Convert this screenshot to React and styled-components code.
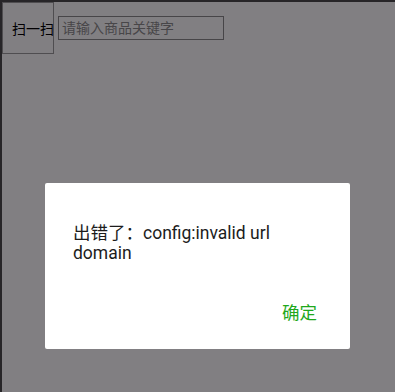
import React from 'react';
import styled, { createGlobalStyle } from 'styled-components';

const GlobalStyle = createGlobalStyle`
    html, body {
        margin:0;
        padding:0;
        background:#fff;
        font-family: Roboto, "Noto Sans CJK SC", sans-serif;
    }
`;

const Page = styled.div`
    min-height:392px;
    border-top:2px solid #4a4a4a;
    border-left:2px solid #4a4a4a;
    box-sizing:border-box;
`;

const SearchBar = styled.div`
    display:flex;
    align-items:center;
    gap:4px;
`;

const ScanButton = styled.button`
    width:52px;
    height:52px;
    padding:0 0 0 9px;
    text-align:left;
    overflow:visible;
    border:1px solid #9a9a9a;
    background:#fff;
    color:#000;
    font-size:14px;
    font-family: Roboto, "Noto Sans CJK SC", sans-serif;
    white-space:nowrap;
`;

const SearchInput = styled.input`
    width:166px;
    height:24px;
    box-sizing:border-box;
    border:1px solid #8a8a8a;
    padding:0 3px;
    font-size:14px;
    font-family: Roboto, "Noto Sans CJK SC", sans-serif;
    &::placeholder{
        color:#8c8c8c;
    }
`;

// dim layer over the page, dialog sits near the bottom
const Overlay = styled.div`
    position:fixed;
    inset:0;
    background:rgba(4, 0, 6, 0.5);
    display:flex;
    justify-content:center;
    align-items:flex-end;
    padding-bottom:43px;
    box-sizing:border-box;
`;

const Dialog = styled.div`
    width:305px;
    height:166px;
    background:#fff;
    border-radius:2px;
    display:flex;
    flex-direction:column;
    justify-content:space-between;
    box-sizing:border-box;
`;

const Message = styled.p`
    margin:0;
    padding:40px 28px 0;
    font-size:17.5px;
    line-height:20px;
    color:#1c1c1c;
`;

const Footer = styled.div`
    display:flex;
    justify-content:flex-end;
    padding:0 25px 17px;
`;

const ConfirmButton = styled.button`
    border:none;
    background:none;
    padding:8px;
    color:#1fa81c;
    font-size:17.5px;
    font-family: Roboto, "Noto Sans CJK SC", sans-serif;
`;

const App = () => {
    return(
    <>
        <GlobalStyle />
        <Page>
            <SearchBar>
                <ScanButton>扫一扫</ScanButton>
                <SearchInput placeholder="请输入商品关键字" />
            </SearchBar>
        </Page>
        <Overlay>
            <Dialog>
                <Message>出错了：config:invalid url domain</Message>
                <Footer>
                    <ConfirmButton>确定</ConfirmButton>
                </Footer>
            </Dialog>
        </Overlay>
    </>
    )
}

export default App;
